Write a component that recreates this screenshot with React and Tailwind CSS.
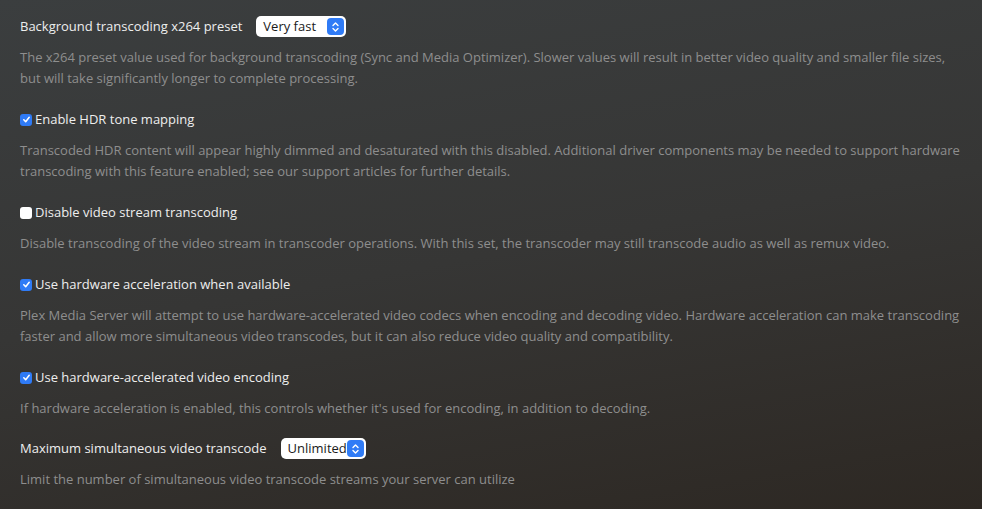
import React from "react";

function Check({ checked }) {
  return checked ? (
    <span className="mr-[3px] inline-flex h-[12px] w-[12px] shrink-0 items-center justify-center rounded-[3px] bg-[#2f7bf6]">
      <svg width="9" height="9" viewBox="0 0 10 10" fill="none">
        <path d="M2 5.3 L4.1 7.4 L8 2.6" stroke="white" strokeWidth="1.7" strokeLinecap="round" strokeLinejoin="round" />
      </svg>
    </span>
  ) : (
    <span className="mr-[3px] inline-block h-[12px] w-[12px] shrink-0 rounded-[3px] bg-white" />
  );
}

function Select({ value, width }) {
  return (
    <span
      className="ml-[14px] inline-flex h-[21px] items-center justify-between rounded-[5px] bg-white pl-[7px] pr-[2px] text-[13px] text-[#1a1a1a]"
      style={{ width }}
    >
      <span>{value}</span>
      <span className="flex h-[17px] w-[17px] items-center justify-center rounded-[4px] bg-[#2f7bf6]">
        <svg width="9" height="12" viewBox="0 0 9 12" fill="none">
          <path d="M2 4.5 L4.5 2 L7 4.5" stroke="white" strokeWidth="1.4" strokeLinecap="round" strokeLinejoin="round" />
          <path d="M2 7.5 L4.5 10 L7 7.5" stroke="white" strokeWidth="1.4" strokeLinecap="round" strokeLinejoin="round" />
        </svg>
      </span>
    </span>
  );
}

function Section({ label, desc, check, select, selectWidth, className = "" }) {
  return (
    <div className={"flex flex-col " + className}>
      <div className="flex h-[21px] items-center text-[13px] text-[#eeeeee]">
        {check !== undefined && <Check checked={check} />}
        <span>{label}</span>
        {select && <Select value={select} width={selectWidth} />}
      </div>
      <p className="mt-[10px] text-[13px] leading-[21px] text-[#8e8e8e]">{desc}</p>
    </div>
  );
}

export default function App() {
  return (
    <div
      className="h-[509px] w-[982px] overflow-hidden bg-[linear-gradient(170deg,#3b3e3f_0%,#363635_50%,#2d2823_100%)] px-[20px] pt-[16px]"
      style={{ fontFamily: '"Open Sans", "Noto Sans", sans-serif' }}
    >
      <div className="flex flex-col gap-[20px]">
        <Section
          label="Background transcoding x264 preset"
          select="Very fast"
          selectWidth={90}
          desc="The x264 preset value used for background transcoding (Sync and Media Optimizer). Slower values will result in better video quality and smaller file sizes, but will take significantly longer to complete processing."
        />
        <Section
          label="Enable HDR tone mapping"
          check={true}
          desc="Transcoded HDR content will appear highly dimmed and desaturated with this disabled. Additional driver components may be needed to support hardware transcoding with this feature enabled; see our support articles for further details."
        />
        <Section
          label="Disable video stream transcoding"
          check={false}
          desc="Disable transcoding of the video stream in transcoder operations. With this set, the transcoder may still transcode audio as well as remux video."
        />
        <Section
          label="Use hardware acceleration when available"
          check={true}
          desc="Plex Media Server will attempt to use hardware-accelerated video codecs when encoding and decoding video. Hardware acceleration can make transcoding faster and allow more simultaneous video transcodes, but it can also reduce video quality and compatibility."
        />
        <Section
          label="Use hardware-accelerated video encoding"
          check={true}
          desc="If hardware acceleration is enabled, this controls whether it's used for encoding, in addition to decoding."
        />
        <Section
          className="-mt-[1px]"
          label="Maximum simultaneous video transcode"
          select="Unlimited"
          selectWidth={85}
          desc="Limit the number of simultaneous video transcode streams your server can utilize"
        />
      </div>
    </div>
  );
}
